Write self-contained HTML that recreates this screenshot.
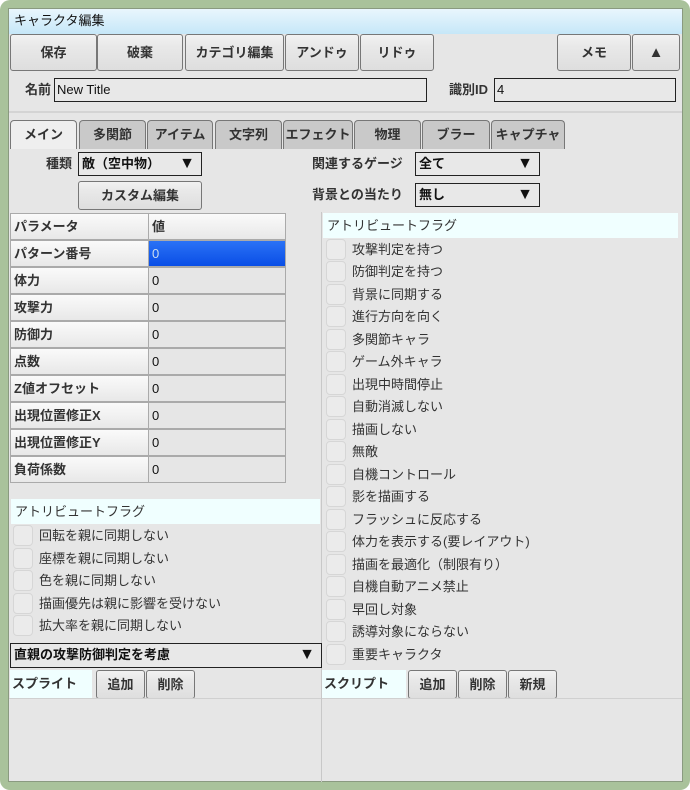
<!DOCTYPE html>
<html><head><meta charset="utf-8"><style>
*{box-sizing:border-box;margin:0;padding:0}
body{width:690px;height:790px;background:#fff;font-family:"Liberation Sans","Noto Sans CJK JP",sans-serif;font-size:13px;color:#111;position:relative;overflow:hidden}
.a{position:absolute}
#outer{left:0;top:0;width:690px;height:790px;background:#a9c29b;border-radius:10px}
#inner{left:8px;top:8px;width:675px;height:774px;background:#e6e6e6;border:1px solid #8a9a80}
.title{left:9px;top:9px;width:673px;height:25px;background:linear-gradient(#e9f6fd,#c6e7f8);padding:0 5px;line-height:24px}
.btn{position:absolute;border:1px solid #777;border-radius:3px;background:linear-gradient(#f2f2f2 0,#e9e9e9 30%,#dedede);text-align:center;font-weight:bold;color:#333}
.inp{position:absolute;border:1px solid #222;background:#e8e8e8;padding:0 2px;height:24px;line-height:22px}
.lbl{position:absolute;font-weight:bold;color:#333;line-height:16px}
.tab{position:absolute;top:120px;height:29px;border:1px solid #777;border-bottom:none;border-radius:4px 4px 0 0;background:#c9c9c9;text-align:center;line-height:28px;font-weight:bold;color:#333}
.sel{position:absolute;border:1px solid #222;background:#e8e8e8;height:24px;padding:0 3px;line-height:22px;font-weight:bold}
.sel:after{content:"▼";position:absolute;right:6px;top:0;font-size:16px;line-height:22px}
.cell{position:absolute;height:27px;border:1px solid #aaa;background:linear-gradient(#fafafa,#e8e8e8);padding:0 3px;line-height:25px;font-weight:bold;color:#333}
.val{position:absolute;height:27px;border:1px solid #aaa;background:#e6e6e6;padding:0 3px;line-height:25px}
.hdr{position:absolute;background:#f0ffff;padding:0 4px;line-height:25px;color:#333}
.cb{position:absolute;width:20px;height:21px;border:1px solid #d6d6d6;border-radius:4px;background:#ebebeb}
.ct{position:absolute;color:#333;line-height:16px}
</style></head><body>
<div class="a" id="outer"></div>
<div class="a" id="inner"></div>
<div class="a title">キャラクタ編集</div>

<div class="btn" style="left:10px;top:34px;width:87px;height:37px;line-height:35px">保存</div>
<div class="btn" style="left:97px;top:34px;width:86px;height:37px;line-height:35px">破棄</div>
<div class="btn" style="left:185px;top:34px;width:99px;height:37px;line-height:35px">カテゴリ編集</div>
<div class="btn" style="left:285px;top:34px;width:74px;height:37px;line-height:35px">アンドゥ</div>
<div class="btn" style="left:360px;top:34px;width:74px;height:37px;line-height:35px">リドゥ</div>
<div class="btn" style="left:557px;top:34px;width:74px;height:37px;line-height:35px">メモ</div>
<div class="btn" style="left:632px;top:34px;width:48px;height:37px;line-height:35px;font-size:15px">▲</div>

<div class="lbl" style="left:25px;top:82px">名前</div>
<div class="inp" style="left:54px;top:78px;width:373px">New Title</div>
<div class="lbl" style="left:449px;top:82px">識別ID</div>
<div class="inp" style="left:494px;top:78px;width:182px">4</div>
<div class="a" style="left:9px;top:111px;width:673px;height:2px;background:#d4d4d4"></div>

<div class="tab" style="left:10px;width:67px;background:#efefef">メイン</div>
<div class="tab" style="left:79px;width:67px">多関節</div>
<div class="tab" style="left:147px;width:66px">アイテム</div>
<div class="tab" style="left:215px;width:67px">文字列</div>
<div class="tab" style="left:283px;width:70px">エフェクト</div>
<div class="tab" style="left:354px;width:67px">物理</div>
<div class="tab" style="left:422px;width:68px">ブラー</div>
<div class="tab" style="left:491px;width:74px">キャプチャ</div>

<div class="lbl" style="left:46px;top:156px">種類</div>
<div class="sel" style="left:78px;top:152px;width:124px">敵（空中物）</div>
<div class="btn" style="left:78px;top:181px;width:124px;height:29px;line-height:27px">カスタム編集</div>
<div class="lbl" style="left:312px;top:156px">関連するゲージ</div>
<div class="sel" style="left:415px;top:152px;width:125px">全て</div>
<div class="lbl" style="left:312px;top:187px">背景との当たり</div>
<div class="sel" style="left:415px;top:183px;width:125px">無し</div>

<div class="cell" style="left:10px;top:213px;width:139px">パラメータ</div><div class="cell" style="left:148px;top:213px;width:138px">値</div>
<div class="cell" style="left:10px;top:240px;width:139px">パターン番号</div><div class="val" style="left:148px;top:240px;width:138px;background:linear-gradient(#2a72f6,#0a4ee6);color:#cde">0</div>
<div class="cell" style="left:10px;top:267px;width:139px">体力</div><div class="val" style="left:148px;top:267px;width:138px">0</div>
<div class="cell" style="left:10px;top:294px;width:139px">攻撃力</div><div class="val" style="left:148px;top:294px;width:138px">0</div>
<div class="cell" style="left:10px;top:321px;width:139px">防御力</div><div class="val" style="left:148px;top:321px;width:138px">0</div>
<div class="cell" style="left:10px;top:348px;width:139px">点数</div><div class="val" style="left:148px;top:348px;width:138px">0</div>
<div class="cell" style="left:10px;top:375px;width:139px">Z値オフセット</div><div class="val" style="left:148px;top:375px;width:138px">0</div>
<div class="cell" style="left:10px;top:402px;width:139px">出現位置修正X</div><div class="val" style="left:148px;top:402px;width:138px">0</div>
<div class="cell" style="left:10px;top:429px;width:139px">出現位置修正Y</div><div class="val" style="left:148px;top:429px;width:138px">0</div>
<div class="cell" style="left:10px;top:456px;width:139px">負荷係数</div><div class="val" style="left:148px;top:456px;width:138px">0</div>

<div class="a" style="left:321px;top:212px;width:1px;height:570px;background:#c8c8c8"></div>

<div class="hdr" style="left:11px;top:499px;width:309px;height:25px">アトリビュートフラグ</div>
<div class="cb" style="left:13px;top:525px"></div><div class="ct" style="left:39px;top:528px">回転を親に同期しない</div>
<div class="cb" style="left:13px;top:548px"></div><div class="ct" style="left:39px;top:551px">座標を親に同期しない</div>
<div class="cb" style="left:13px;top:570px"></div><div class="ct" style="left:39px;top:573px">色を親に同期しない</div>
<div class="cb" style="left:13px;top:593px"></div><div class="ct" style="left:39px;top:596px">描画優先は親に影響を受けない</div>
<div class="cb" style="left:13px;top:615px"></div><div class="ct" style="left:39px;top:618px">拡大率を親に同期しない</div>
<div class="sel" style="left:10px;top:643px;width:312px;height:25px">直親の攻撃防御判定を考慮</div>

<div class="a" style="left:10px;top:670px;width:82px;height:29px;background:#f0ffff;padding:0 2px;line-height:28px;font-weight:bold;color:#333">スプライト</div>
<div class="btn" style="left:96px;top:670px;width:49px;height:29px;line-height:27px">追加</div>
<div class="btn" style="left:146px;top:670px;width:49px;height:29px;line-height:27px">削除</div>
<div class="a" style="left:9px;top:698px;width:312px;height:1px;background:#d0d0d0"></div>

<div class="hdr" style="left:323px;top:213px;width:355px;height:25px">アトリビュートフラグ</div>
<div class="a" style="left:322px;top:670px;width:84px;height:29px;background:#f0ffff;padding:0 2px;line-height:28px;font-weight:bold;color:#333">スクリプト</div>
<div class="btn" style="left:408px;top:670px;width:49px;height:29px;line-height:27px">追加</div>
<div class="btn" style="left:458px;top:670px;width:49px;height:29px;line-height:27px">削除</div>
<div class="btn" style="left:508px;top:670px;width:49px;height:29px;line-height:27px">新規</div>
<div class="a" style="left:322px;top:698px;width:360px;height:1px;background:#d0d0d0"></div>

<div class="cb" style="left:326px;top:239px"></div><div class="ct" style="left:352px;top:242px">攻撃判定を持つ</div>
<div class="cb" style="left:326px;top:261px"></div><div class="ct" style="left:352px;top:264px">防御判定を持つ</div>
<div class="cb" style="left:326px;top:284px"></div><div class="ct" style="left:352px;top:287px">背景に同期する</div>
<div class="cb" style="left:326px;top:306px"></div><div class="ct" style="left:352px;top:309px">進行方向を向く</div>
<div class="cb" style="left:326px;top:329px"></div><div class="ct" style="left:352px;top:332px">多関節キャラ</div>
<div class="cb" style="left:326px;top:351px"></div><div class="ct" style="left:352px;top:354px">ゲーム外キャラ</div>
<div class="cb" style="left:326px;top:374px"></div><div class="ct" style="left:352px;top:377px">出現中時間停止</div>
<div class="cb" style="left:326px;top:396px"></div><div class="ct" style="left:352px;top:399px">自動消滅しない</div>
<div class="cb" style="left:326px;top:419px"></div><div class="ct" style="left:352px;top:422px">描画しない</div>
<div class="cb" style="left:326px;top:441px"></div><div class="ct" style="left:352px;top:444px">無敵</div>
<div class="cb" style="left:326px;top:464px"></div><div class="ct" style="left:352px;top:467px">自機コントロール</div>
<div class="cb" style="left:326px;top:486px"></div><div class="ct" style="left:352px;top:489px">影を描画する</div>
<div class="cb" style="left:326px;top:509px"></div><div class="ct" style="left:352px;top:512px">フラッシュに反応する</div>
<div class="cb" style="left:326px;top:531px"></div><div class="ct" style="left:352px;top:534px">体力を表示する(要レイアウト)</div>
<div class="cb" style="left:326px;top:554px"></div><div class="ct" style="left:352px;top:557px">描画を最適化（制限有り）</div>
<div class="cb" style="left:326px;top:576px"></div><div class="ct" style="left:352px;top:579px">自機自動アニメ禁止</div>
<div class="cb" style="left:326px;top:599px"></div><div class="ct" style="left:352px;top:602px">早回し対象</div>
<div class="cb" style="left:326px;top:621px"></div><div class="ct" style="left:352px;top:624px">誘導対象にならない</div>
<div class="cb" style="left:326px;top:644px"></div><div class="ct" style="left:352px;top:647px">重要キャラクタ</div>
</body></html>
